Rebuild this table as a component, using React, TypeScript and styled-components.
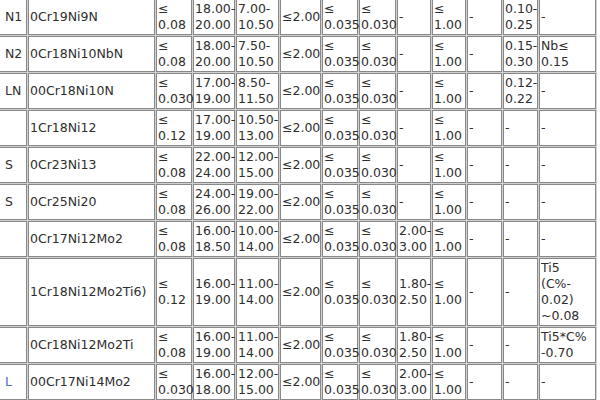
import React from "react";
import styled, { createGlobalStyle } from "styled-components";

const GlobalStyle = createGlobalStyle`
  html, body {
    margin: 0;
    padding: 0;
    background: #ffffff;
    overflow: hidden;
  }
`;

// column widths (px), first column is cut off at the left edge
const widths = [29, 127, 36, 42, 43, 41, 36, 37, 34, 34, 35, 35, 57];

type Row = { label: string; blue?: boolean; cells: string[] };

const rows: Row[] = [
  {
    label: "N1",
    cells: ["0Cr19Ni9N", "≤\n0.08", "18.00-\n20.00", "7.00-\n10.50", "≤2.00", "≤\n0.035", "≤\n0.030", "-", "≤\n1.00", "-", "0.10-\n0.25", "-"],
  },
  {
    label: "N2",
    cells: ["0Cr18Ni10NbN", "≤\n0.08", "18.00-\n20.00", "7.50-\n10.50", "≤2.00", "≤\n0.035", "≤\n0.030", "-", "≤\n1.00", "-", "0.15-\n0.30", "Nb≤\n0.15"],
  },
  {
    label: "LN",
    cells: ["00Cr18Ni10N", "≤\n0.030", "17.00-\n19.00", "8.50-\n11.50", "≤2.00", "≤\n0.035", "≤\n0.030", "-", "≤\n1.00", "-", "0.12-\n0.22", "-"],
  },
  {
    label: "",
    cells: ["1Cr18Ni12", "≤\n0.12", "17.00-\n19.00", "10.50-\n13.00", "≤2.00", "≤\n0.035", "≤\n0.030", "-", "≤\n1.00", "-", "-", "-"],
  },
  {
    label: "S",
    cells: ["0Cr23Ni13", "≤\n0.08", "22.00-\n24.00", "12.00-\n15.00", "≤2.00", "≤\n0.035", "≤\n0.030", "-", "≤\n1.00", "-", "-", "-"],
  },
  {
    label: "S",
    cells: ["0Cr25Ni20", "≤\n0.08", "24.00-\n26.00", "19.00-\n22.00", "≤2.00", "≤\n0.035", "≤\n0.030", "-", "≤\n1.00", "-", "-", "-"],
  },
  {
    label: "",
    cells: ["0Cr17Ni12Mo2", "≤\n0.08", "16.00-\n18.50", "10.00-\n14.00", "≤2.00", "≤\n0.035", "≤\n0.030", "2.00-\n3.00", "≤\n1.00", "-", "-", "-"],
  },
  {
    label: "",
    cells: ["1Cr18Ni12Mo2Ti6)", "≤\n0.12", "16.00-\n19.00", "11.00-\n14.00", "≤2.00", "≤\n0.035", "≤\n0.030", "1.80-\n2.50", "≤\n1.00", "-", "-", "Ti5\n(C%-\n0.02)\n~0.08"],
  },
  {
    label: "",
    cells: ["0Cr18Ni12Mo2Ti", "≤\n0.08", "16.00-\n19.00", "11.00-\n14.00", "≤2.00", "≤\n0.035", "≤\n0.030", "1.80-\n2.50", "≤\n1.00", "-", "-", "Ti5*C%\n-0.70"],
  },
  {
    label: "L",
    blue: true,
    cells: ["00Cr17Ni14Mo2", "≤\n0.030", "16.00-\n18.00", "12.00-\n15.00", "≤2.00", "≤\n0.035", "≤\n0.030", "2.00-\n3.00", "≤\n1.00", "-", "-", "-"],
  },
];

const App = () => {
  return (
    <>
      <GlobalStyle />
      <StFrame>
        <StTable>
          <colgroup>
            {widths.map((w, i) => (
              <StCol key={i} $w={w} />
            ))}
          </colgroup>
          <tbody>
            {rows.map((row, r) => (
              <tr key={r}>
                <StLabelCell $blue={row.blue}>{row.label}</StLabelCell>
                {row.cells.map((text, c) => (
                  <StCell key={c}>
                    {text.split("\n").map((line, l) => (
                      <React.Fragment key={l}>
                        {l > 0 && <br />}
                        {line}
                      </React.Fragment>
                    ))}
                  </StCell>
                ))}
              </tr>
            ))}
          </tbody>
        </StTable>
      </StFrame>
    </>
  );
};

export default App;

const StFrame = styled.div`
  width: 600px;
  height: 400px;
  overflow: hidden;
  background: #ffffff;
`;

const StTable = styled.table`
  table-layout: fixed;
  width: 600px;
  margin: -2px 0 0 -3px;
  border-collapse: separate;
  border-spacing: 1px;
  background: #d2d2d2;
  font-family: "DejaVu Sans", Verdana, sans-serif;
  font-size: 12.5px;
  line-height: 16px;
  color: #2e2e2e;
`;

const StCol = styled.col<{ $w: number }>`
  width: ${(p) => p.$w}px;
`;

const StCell = styled.td`
  box-sizing: border-box;
  height: 36px;
  padding: 1px 0 1px 1px;
  border: 1px solid #888888;
  background: #ffffff;
  vertical-align: middle;
  text-align: left;
  white-space: nowrap;
  overflow: visible;
`;

const StLabelCell = styled(StCell)<{ $blue?: boolean }>`
  padding-left: 6px;
  color: ${(p) => (p.$blue ? "#4a6cc4" : "#2e2e2e")};
  overflow: hidden;
`;
